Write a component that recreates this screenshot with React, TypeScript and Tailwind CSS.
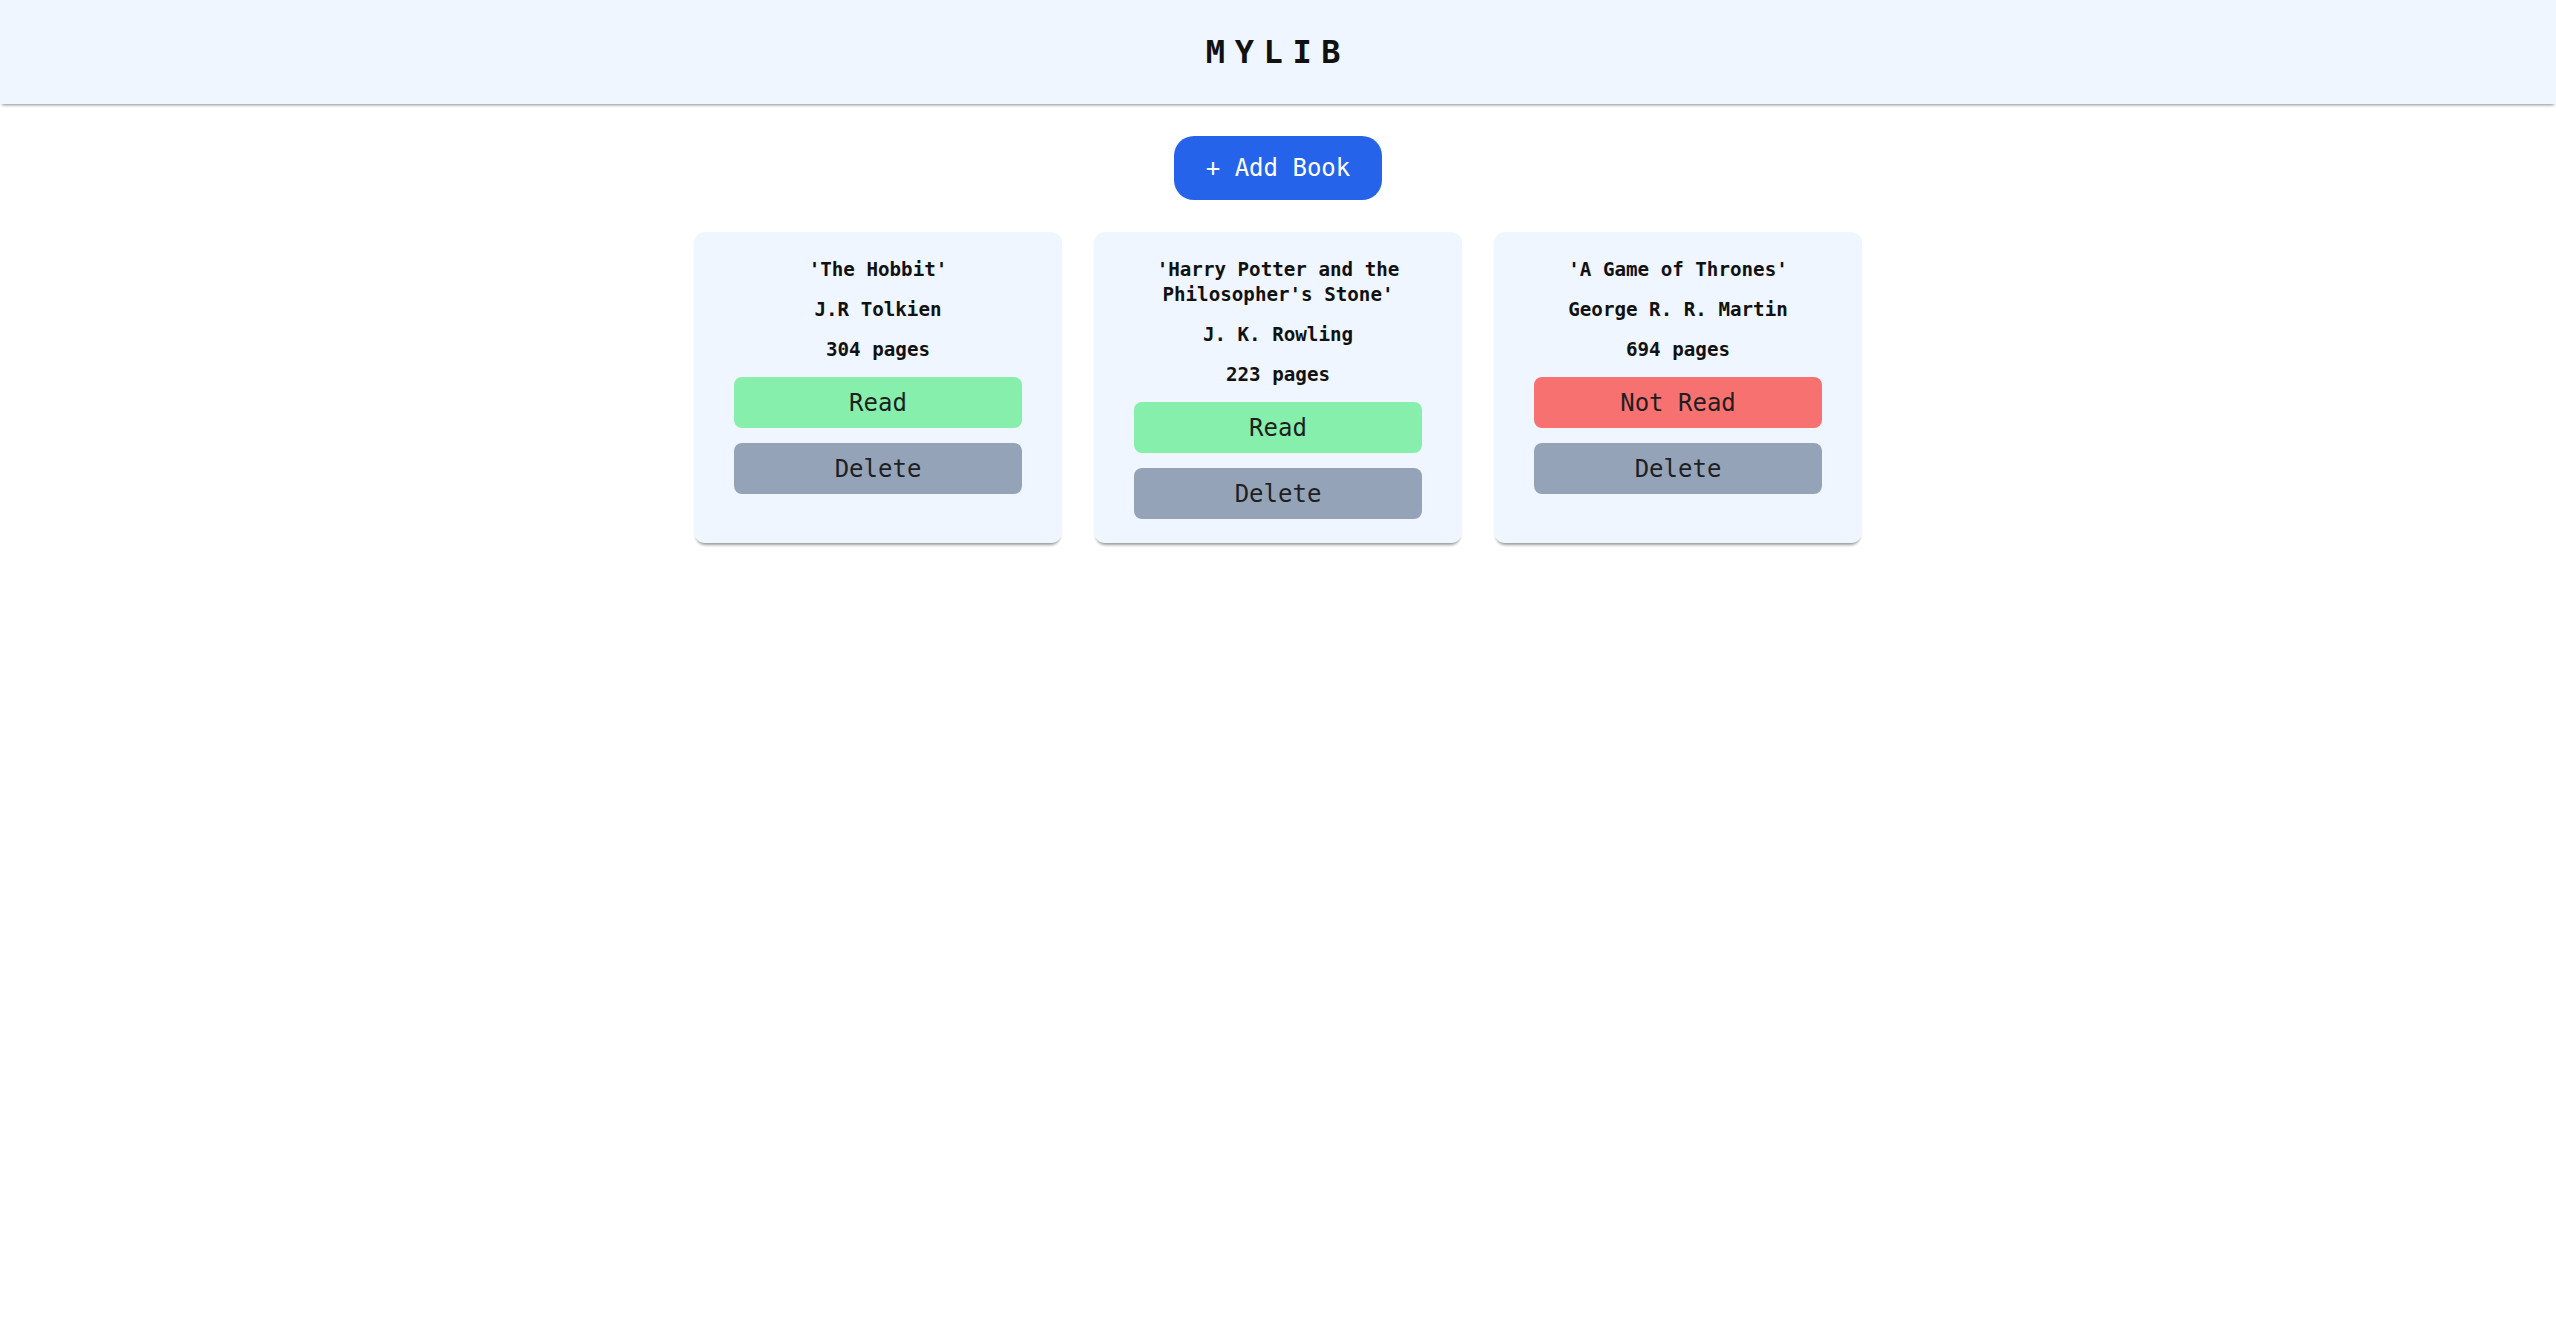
import React from 'react';

type Book = {
  title: string;
  author: string;
  pages: number;
  read: boolean;
};

const books: Book[] = [
  { title: 'The Hobbit', author: 'J.R Tolkien', pages: 304, read: true },
  { title: "Harry Potter and the Philosopher's Stone", author: 'J. K. Rowling', pages: 223, read: true },
  { title: 'A Game of Thrones', author: 'George R. R. Martin', pages: 694, read: false },
];

const BookCard: React.FC<{ book: Book }> = ({ book }) => {
  return (
    <div className="w-[368px] bg-[#eff6ff] rounded-[11px] shadow-[0_4px_3px_-2px_rgba(0,0,0,0.4)] px-10 pt-[25px] pb-6 flex flex-col gap-[15px]">
      <p className="text-[19.2px] leading-[25px] font-bold text-[#111] text-center">'{book.title}'</p>
      <p className="text-[19.2px] leading-[25px] font-bold text-[#111] text-center">{book.author}</p>
      <p className="text-[19.2px] leading-[25px] font-bold text-[#111] text-center">{book.pages} pages</p>
      <button
        className={
          book.read
            ? 'h-[51px] w-full rounded-lg bg-[#86efac] text-[24px] text-[#1f1f1f]'
            : 'h-[51px] w-full rounded-lg bg-[#f87171] text-[24px] text-[#1f1f1f]'
        }
      >
        {book.read ? 'Read' : 'Not Read'}
      </button>
      <button className="h-[51px] w-full rounded-lg bg-[#94a3b8] text-[24px] text-[#1f1f1f]">
        Delete
      </button>
    </div>
  );
};

const App: React.FC = () => {
  return (
    <div className="min-h-screen bg-white font-['DejaVu_Sans_Mono','Liberation_Mono',monospace]">
      {/* Header */}
      <header className="h-[104px] bg-[#eff6ff] flex items-center justify-center shadow-[0_3px_3px_-2px_rgba(0,0,0,0.45)]">
        <h1 className="text-[32px] font-bold tracking-[0.3em] text-[#111]">MYLIB</h1>
      </header>

      <main className="flex flex-col items-center pt-8">
        <button className="h-16 px-8 rounded-[20px] bg-[#2563eb] text-white text-2xl">
          + Add Book
        </button>

        {/* Books */}
        <div className="flex justify-center gap-8 mt-8">
          {books.map((b) => (
            <BookCard key={b.title} book={b} />
          ))}
        </div>
      </main>
    </div>
  );
};

export default App;
